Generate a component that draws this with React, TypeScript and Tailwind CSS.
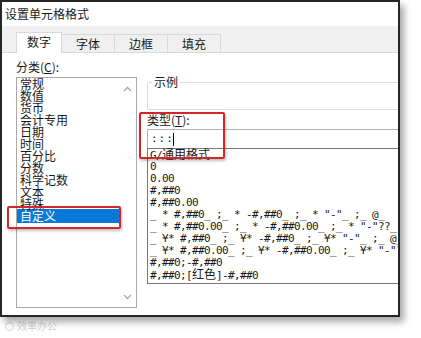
const categories = [
  "常规",
  "数值",
  "货币",
  "会计专用",
  "日期",
  "时间",
  "百分比",
  "分数",
  "科学记数",
  "文本",
  "特殊",
  "自定义",
];

const formats: string[] = [
  "G/[通用格式]",
  "0",
  "0.00",
  "#,##0",
  "#,##0.00",
  '_ * #,##0_ ;_ * -#,##0_ ;_ * "-"_ ;_ @_ ',
  '_ * #,##0.00_ ;_ * -#,##0.00_ ;_ * "-"??_ ;_ @_ ',
  '_ ¥* #,##0_ ;_ ¥* -#,##0_ ;_ ¥* "-"_ ;_ @_ ',
  '_ ¥* #,##0.00_ ;_ ¥* -#,##0.00_ ;_ ¥* "-"??_ ;_ @_ ',
  "#,##0;-#,##0",
  "#,##0;[[红色]]-#,##0",
];

// split "[[...]]" / "[...]" markers so CJK runs get full 12px cells
function FormatLine({ text }: { text: string }) {
  const parts = text.split(/(\[\[[^\]]+\]\]|\[[^\]]+\])/);
  return (
    <>
      {parts.map((p, i) => {
        if (p.startsWith("[[")) {
          return (
            <span key={i}>
              [<span className="text-[12px] tracking-normal">{p.slice(2, -2)}</span>]
            </span>
          );
        }
        if (p.startsWith("[")) {
          return (
            <span key={i} className="text-[12px] tracking-normal">
              {p.slice(1, -1)}
            </span>
          );
        }
        return <span key={i}>{p}</span>;
      })}
    </>
  );
}

function Chevron({ down }: { down?: boolean }) {
  return (
    <svg width="9" height="6" viewBox="0 0 9 6" className={down ? "rotate-180" : ""}>
      <polyline points="1,5 4.5,1.5 8,5" fill="none" stroke="#a8a8a8" strokeWidth="1.3" />
    </svg>
  );
}

export default function App() {
  return (
    <div className="relative w-[421px] h-[338px] bg-white overflow-hidden text-[#1a1a1a] [font-family:'Noto_Sans_CJK_SC',sans-serif]">
      {/* Dialog */}
      <div className="relative w-[400px] h-[317px] border-2 border-[#262626] bg-white overflow-hidden shadow-[4px_5px_7px_rgba(0,0,0,0.35)]">
        {/* Title */}
        <div className="h-[24px] pl-[3px] flex items-center text-[12px] leading-none">设置单元格格式</div>

        {/* Tabs */}
        <div className="h-[27px] bg-[#f0f0f0] border-b border-[#d9d9d9] flex items-end pl-[14px] text-[12px]">
          <div className="w-[46px] h-[21px] -mb-px bg-white border border-b-0 border-[#d9d9d9] flex items-center justify-center pb-[2px]">
            数字
          </div>
          <div className="w-[53px] h-[18px] border-t border-r border-[#d9d9d9] flex items-center justify-center">字体</div>
          <div className="w-[53px] h-[18px] border-t border-r border-[#d9d9d9] flex items-center justify-center">边框</div>
          <div className="w-[53px] h-[18px] border-t border-r border-[#d9d9d9] flex items-center justify-center">填充</div>
        </div>

        {/* Body */}
        <div className="flex pl-[14px] pt-[7px] gap-[10px]">
          {/* Category */}
          <div className="w-[121px] shrink-0">
            <div className="h-[14px] leading-[14px] text-[12px]">
              分类(<span className="underline">C</span>):
            </div>
            <div className="mt-[3px] h-[231px] border border-[#a9a9a9] flex">
              <div className="flex-1 text-[12px] leading-[12px]">
                {categories.map((c, i) =>
                  i === categories.length - 1 ? (
                    <div key={c} className="h-[14px] leading-[14px] -my-px pl-[3px] bg-[#0a78d7] text-white">
                      {c}
                    </div>
                  ) : (
                    <div key={c} className="h-[12px] pl-[3px] overflow-visible whitespace-nowrap">
                      {c}
                    </div>
                  )
                )}
              </div>
              <div className="w-[17px] flex flex-col items-center justify-between pt-[8px] pb-[7px]">
                <Chevron />
                <Chevron down />
              </div>
            </div>
          </div>

          {/* Type */}
          <div className="w-[262px] shrink-0">
            <fieldset className="mt-[15px] h-[35px] border border-[#dcdcdc] rounded-[2px]">
              <legend className="ml-[4px] px-[2px] text-[12px] leading-[14px]">示例</legend>
            </fieldset>
            <div className="mt-[3px] h-[14px] leading-[14px] text-[12px]">
              类型(<span className="underline">T</span>):
            </div>
            <div className="mt-[2px] h-[19px] border border-b-0 border-[#b4b4b4] flex items-center pl-[3px] text-[11px] [font-family:'DejaVu_Sans_Mono',monospace] tracking-[1px]">
              :::<span className="w-px h-[13px] bg-black -ml-px" />
            </div>
            <div className="h-[136px] border border-[#7a7a7a] pl-[2px] whitespace-pre text-[11px] leading-[12px] tracking-[-0.62px] [font-family:'DejaVu_Sans_Mono','Noto_Sans_CJK_SC',monospace]">
              {formats.map((f, i) => (
                <div key={i} className="h-[12px]">
                  <FormatLine text={f} />
                </div>
              ))}
            </div>
          </div>
        </div>

        {/* Annotation boxes */}
        <div className="absolute left-[5px] top-[204px] w-[114px] h-[23px] border-2 border-[#d2262b] rounded-[2px] shadow-[1px_2px_3px_rgba(0,0,0,0.25)]" />
        <div className="absolute left-[137px] top-[110px] w-[86px] h-[47px] border-2 border-[#d2262b] rounded-[2px] shadow-[1px_2px_3px_rgba(0,0,0,0.25)]" />
      </div>

      {/* Watermark */}
      <div className="mt-[4px] pl-[5px] flex items-center gap-[3px] text-[10px] leading-none text-[#d4d4d4]">
        <span className="w-[9px] h-[9px] rounded-full border border-[#d4d4d4]" />
        <span>效率办公</span>
      </div>
    </div>
  );
}
